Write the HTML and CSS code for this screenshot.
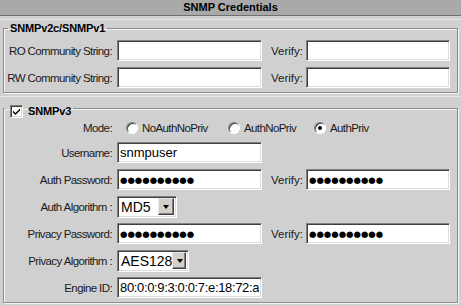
FILE: index.html
```html
<!DOCTYPE html>
<html>
<head>
<meta charset="utf-8">
<link rel="stylesheet" href="styles.css">
</head>
<body>
<div class="header">SNMP Credentials</div>

<div class="cell cell1">
  <fieldset class="group">
    <legend class="legend">SNMPv2c/SNMPv1</legend>
    <div class="grid">
      <label class="lbl">RO Community String:</label>
      <input class="field" type="text" value="">
      <label class="vlbl">Verify:</label>
      <input class="field" type="text" value="">
      <label class="lbl">RW Community String:</label>
      <input class="field" type="text" value="">
      <label class="vlbl">Verify:</label>
      <input class="field" type="text" value="">
    </div>
  </fieldset>
</div>

<div class="cell cell2">
  <fieldset class="group group2">
    <legend class="legend legend2">
      <span class="check"><svg width="9" height="9" viewBox="0 0 9 9"><path d="M1 3.5 L3.5 6 L8 1.5 L8 3.5 L3.5 8 L1 5.5 Z" fill="#000"/></svg></span>
      <span>SNMPv3</span>
    </legend>
    <div class="grid grid2">
      <label class="lbl">Mode:</label>
      <div class="radios">
        <span class="opt o1"><span class="radio"></span>NoAuthNoPriv</span>
        <span class="opt o2"><span class="radio"></span>AuthNoPriv</span>
        <span class="opt o3"><span class="radio on"></span>AuthPriv</span>
      </div>

      <label class="lbl">Username:</label>
      <input class="field" type="text" value="snmpuser">
      <span class="empty"></span><span class="empty"></span>

      <label class="lbl">Auth Password:</label>
      <input class="field dots" type="text" value="●●●●●●●●●●">
      <label class="vlbl">Verify:</label>
      <input class="field dots" type="text" value="●●●●●●●●●●">

      <label class="lbl">Auth Algorithm :</label>
      <div class="select s-md5"><span class="sval">MD5</span><span class="sbtn"></span></div>
      <span class="empty"></span><span class="empty"></span>

      <label class="lbl">Privacy Password:</label>
      <input class="field dots" type="text" value="●●●●●●●●●●">
      <label class="vlbl">Verify:</label>
      <input class="field dots" type="text" value="●●●●●●●●●●">

      <label class="lbl">Privacy Algorithm :</label>
      <div class="select s-aes"><span class="sval">AES128</span><span class="sbtn"></span></div>
      <span class="empty"></span><span class="empty"></span>

      <label class="lbl">Engine ID:</label>
      <input class="field engine" type="text" value="80:0:0:9:3:0:0:7:e:18:72:a">
      <span class="empty"></span><span class="empty"></span>
    </div>
  </fieldset>
</div>
</body>
</html>
```

FILE: styles.css
```css
html, body {
  margin: 0;
  padding: 0;
  background: #d0d0d0;
  font-family: "Liberation Sans", Arial, sans-serif;
  font-size: 11.5px;
  letter-spacing: -0.6px;
  color: #1a1a1a;
  width: 461px;
  height: 306px;
  overflow: hidden;
}

.header {
  height: 15px;
  line-height: 15px;
  background: #a9a9a9;
  border-bottom: 1px solid #6f6f6f;
  text-align: center;
  font-size: 11px;
  letter-spacing: 0;
  font-weight: bold;
  color: #000;
}

.cell {
  border-top: 1px solid #e6e6e6;
  padding: 0 0 3px 0;
}

.cell1 {
  margin-top: 3px;
  padding-top: 1px;
}

.cell2 {
  padding-top: 1px;
}

.group {
  margin: 0 3px;
  padding: 5px 0 4px 0;
  border: 1px solid #8c8c8c;
  box-shadow: inset 1px 1px 0 #f2f2f2, 1px 1px 0 #f2f2f2;
  min-width: 0;
}

.group2 {
  padding-top: 2px;
}

.legend {
  padding: 0 2px;
  margin-left: 4px;
  font-size: 11px;
  font-weight: bold;
  letter-spacing: -0.15px;
  line-height: 14px;
  color: #000;
}

.legend2 {
  display: flex;
  align-items: center;
  gap: 5px;
  padding: 6px 2px 0 5px;
  margin-left: 1px;
}

.check {
  width: 13px;
  height: 13px;
  box-sizing: border-box;
  background: #fff;
  border-top: 1px solid #808080;
  border-left: 1px solid #808080;
  border-right: 1px solid #fff;
  border-bottom: 1px solid #fff;
  box-shadow: inset 1px 1px 0 #404040, inset -1px -1px 0 #d4d4d4;
  display: flex;
  align-items: center;
  justify-content: center;
}

.grid {
  display: grid;
  grid-template-columns: 113px 145px 44px 144px;
  grid-auto-rows: 21px;
  row-gap: 6px;
  align-items: center;
}

.grid2 {
  grid-template-rows: 16px;
}

.lbl {
  text-align: right;
  padding-right: 5px;
  white-space: nowrap;
}

.vlbl {
  text-align: right;
  padding-right: 3px;
  letter-spacing: 0;
}

.field {
  box-sizing: border-box;
  width: 100%;
  height: 21px;
  margin: 0;
  padding: 0 2px;
  font-family: "Liberation Sans", Arial, sans-serif;
  font-size: 13px;
  letter-spacing: 0;
  color: #000;
  background: #fff;
  border-top: 1px solid #808080;
  border-left: 1px solid #808080;
  border-right: 1px solid #fff;
  border-bottom: 1px solid #fff;
  box-shadow: inset 1px 1px 0 #404040, inset -1px -1px 0 #dcdcdc;
  outline: none;
}

.engine {
  letter-spacing: -0.35px;
}

.dots {
  font-family: "DejaVu Sans", sans-serif;
  font-size: 8.5px;
}

.radios {
  grid-column: 2 / 5;
  display: flex;
  align-items: center;
  padding-left: 9px;
}

.opt {
  display: flex;
  align-items: center;
  gap: 4px;
}

.o1 { width: 102px; }
.o2 { width: 86px; }

.radio {
  width: 12px;
  height: 12px;
  box-sizing: border-box;
  border-radius: 50%;
  background: #fff;
  border: 1px solid;
  border-color: #808080 #fff #fff #808080;
  box-shadow: inset 1px 1px 0 #404040;
  position: relative;
}

.radio.on::after {
  content: "";
  position: absolute;
  left: 3px;
  top: 3px;
  width: 4px;
  height: 4px;
  border-radius: 50%;
  background: #000;
}

.select {
  box-sizing: border-box;
  height: 22px;
  display: flex;
  align-items: center;
  justify-content: space-between;
  background: #fff;
  border-top: 1px solid #808080;
  border-left: 1px solid #808080;
  border-right: 1px solid #fff;
  border-bottom: 1px solid #fff;
  box-shadow: inset 1px 1px 0 #404040, inset -1px -1px 0 #dcdcdc;
  padding: 2px;
  font-size: 14px;
  letter-spacing: 0;
  color: #000;
}

.s-md5 { width: 60px; }
.s-aes { width: 72px; }

.sval {
  padding-left: 1px;
}

.sbtn {
  width: 16px;
  height: 17px;
  box-sizing: border-box;
  background: #d4d0c8;
  border: 1px solid;
  border-color: #e8e8e8 #404040 #404040 #e8e8e8;
  box-shadow: inset -1px -1px 0 #808080;
  position: relative;
}

.sbtn::after {
  content: "";
  position: absolute;
  left: 4px;
  top: 6px;
  border-left: 3px solid transparent;
  border-right: 3px solid transparent;
  border-top: 4px solid #000;
}
```
